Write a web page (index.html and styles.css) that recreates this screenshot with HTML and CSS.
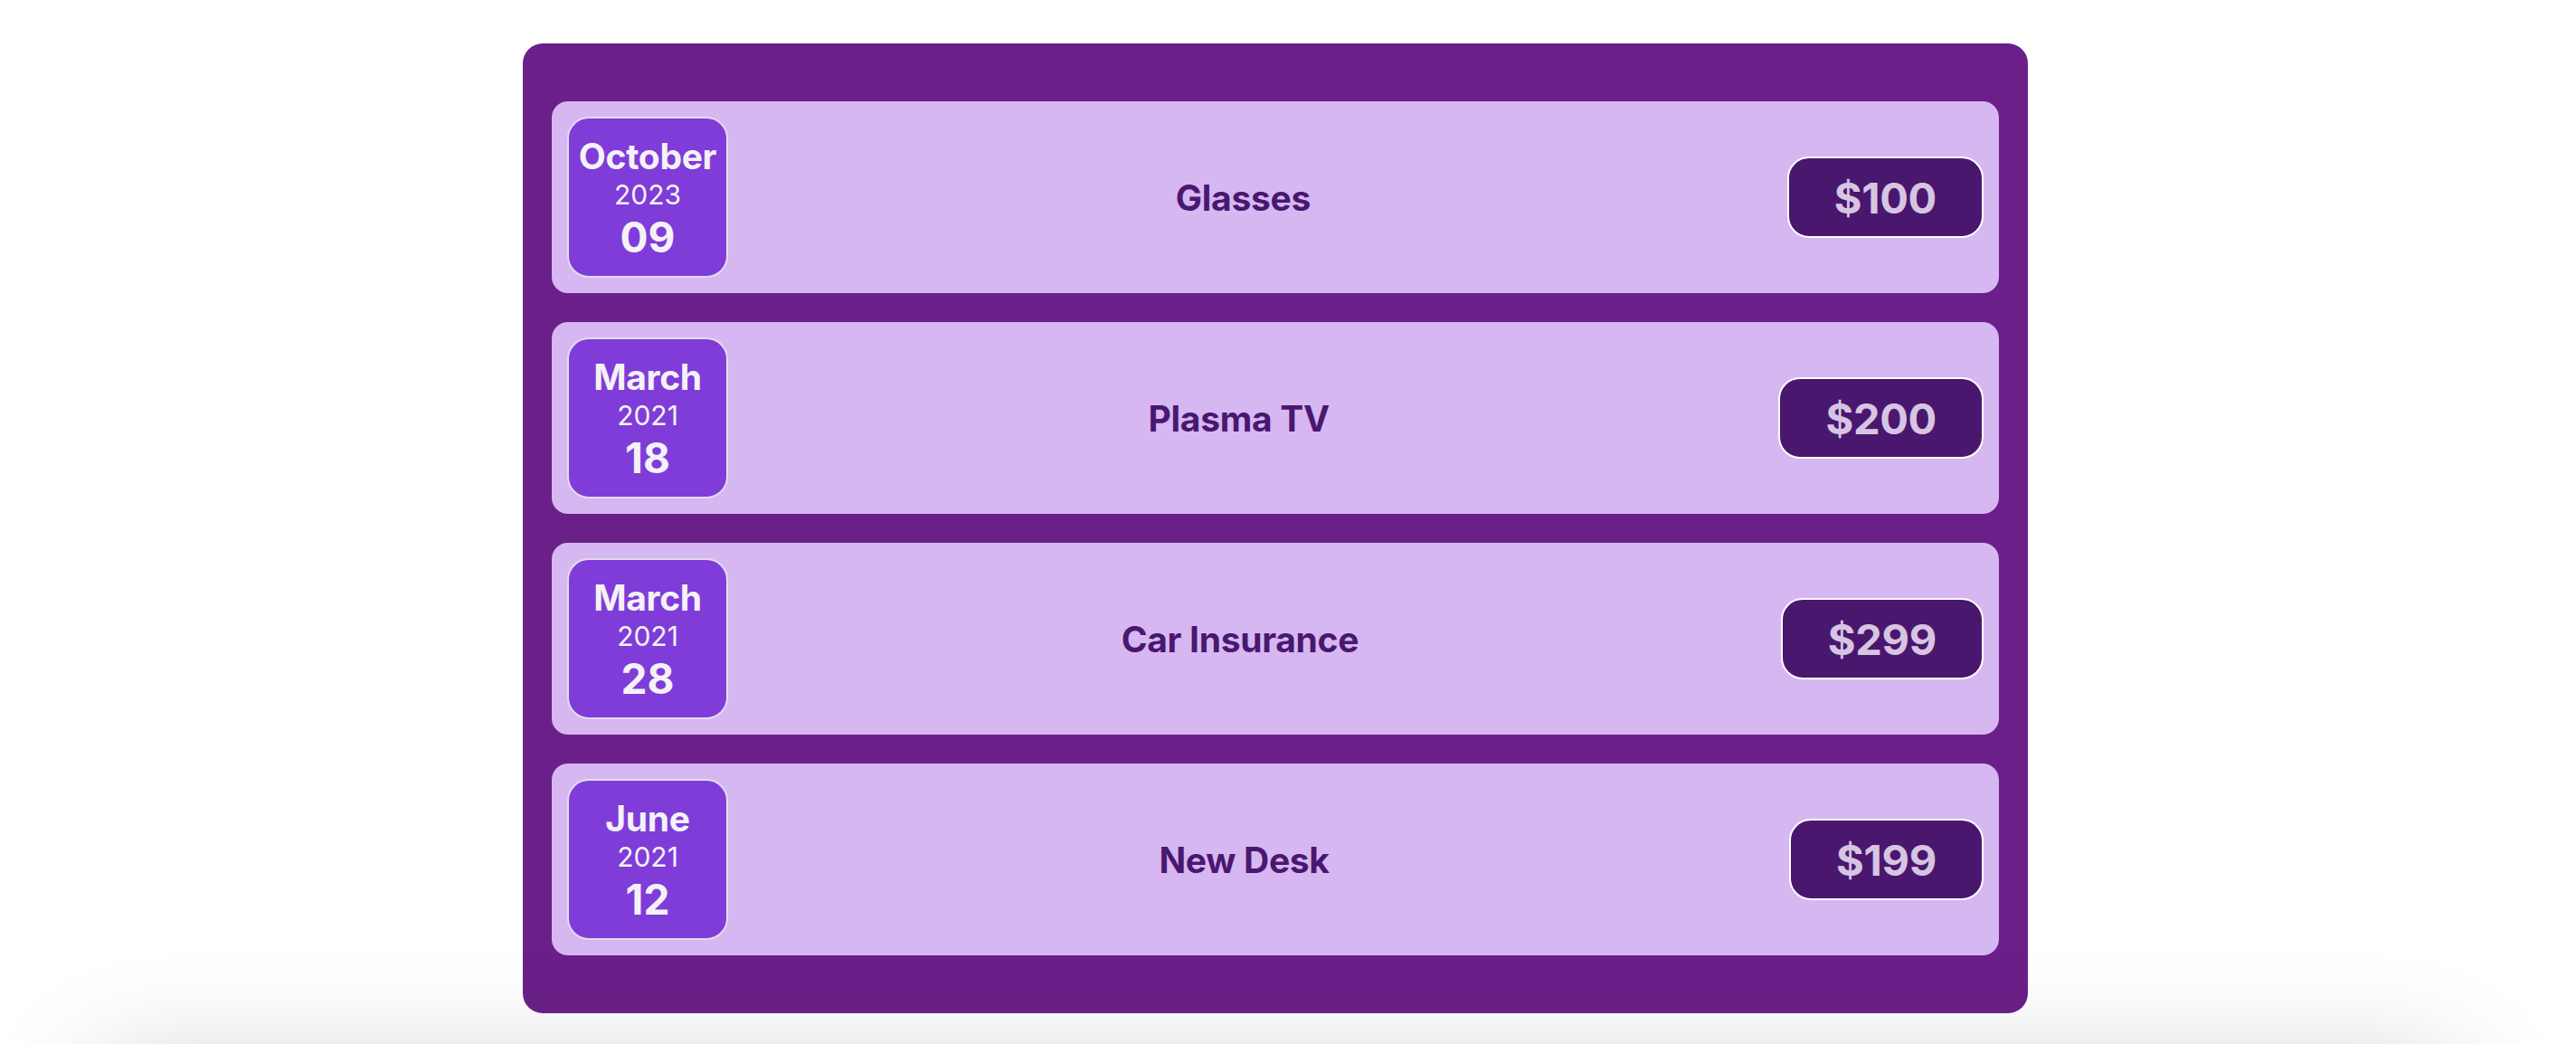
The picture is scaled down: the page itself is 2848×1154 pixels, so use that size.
FILE: index.html
```html
<!DOCTYPE html>
<html lang="en">
<head>
<meta charset="utf-8">
<title>Expenses</title>
<link rel="stylesheet" href="styles.css">
</head>
<body class="page-body">
<div class="page">
  <div class="expenses">
    <div class="expense-item">
      <div class="expense-date">
        <div class="expense-date__month">October</div>
        <div class="expense-date__year">2023</div>
        <div class="expense-date__day">09</div>
      </div>
      <div class="expense-item__description">
        <h2 class="expense-item__title">Glasses</h2>
        <div class="expense-item__price">$100</div>
      </div>
    </div>
    <div class="expense-item">
      <div class="expense-date">
        <div class="expense-date__month">March</div>
        <div class="expense-date__year">2021</div>
        <div class="expense-date__day">18</div>
      </div>
      <div class="expense-item__description">
        <h2 class="expense-item__title">Plasma TV</h2>
        <div class="expense-item__price">$200</div>
      </div>
    </div>
    <div class="expense-item">
      <div class="expense-date">
        <div class="expense-date__month">March</div>
        <div class="expense-date__year">2021</div>
        <div class="expense-date__day">28</div>
      </div>
      <div class="expense-item__description">
        <h2 class="expense-item__title">Car Insurance</h2>
        <div class="expense-item__price">$299</div>
      </div>
    </div>
    <div class="expense-item">
      <div class="expense-date">
        <div class="expense-date__month">June</div>
        <div class="expense-date__year">2021</div>
        <div class="expense-date__day">12</div>
      </div>
      <div class="expense-item__description">
        <h2 class="expense-item__title">New Desk</h2>
        <div class="expense-item__price">$199</div>
      </div>
    </div>
  </div>
  <div class="next-card"></div>
</div>
</body>
</html>
```

FILE: styles.css
```css
html, .page-body {
  margin: 0;
  padding: 0;
  overflow: hidden;
  background: #ffffff;
  font-family: "Inter", "Noto Sans", sans-serif;
}

.page {
  padding-right: 28px;
  padding-top: 48px;
}

.expenses {
  width: 1600px;
  margin: 0 auto;
  padding: 64px 32px;
  background-color: #6b2089;
  border-radius: 22px;
  display: flex;
  flex-direction: column;
  gap: 32px;
}

.expense-item {
  display: flex;
  align-items: center;
  padding: 17px;
  background-color: #d6b7f2;
  border-radius: 18px;
}

.expense-date {
  box-sizing: border-box;
  width: 178px;
  height: 178px;
  flex: none;
  display: flex;
  flex-direction: column;
  align-items: center;
  justify-content: center;
  padding-top: 4px;
  background-color: #7f3cd9;
  border: 2px solid #e4dced;
  border-radius: 24px;
  color: #f4f2f6;
}

.expense-date__month {
  font-size: 39px;
  font-weight: 700;
  line-height: 44px;
  letter-spacing: -0.3px;
}

.expense-date__year {
  font-size: 30px;
  font-weight: 400;
  line-height: 40px;
}

.expense-date__day {
  font-size: 46px;
  font-weight: 700;
  line-height: 54px;
}

.expense-item__description {
  flex: 1;
  display: flex;
  align-items: center;
  gap: 32px;
}

.expense-item__title {
  flex: 1;
  margin: 0;
  text-align: center;
  font-size: 39px;
  font-weight: 700;
  letter-spacing: -0.3px;
  color: #4a1770;
}

.expense-item__price {
  box-sizing: border-box;
  height: 90px;
  display: flex;
  align-items: center;
  padding: 0 50px;
  font-size: 47px;
  font-weight: 700;
  letter-spacing: -0.3px;
  color: #d6c5e2;
  background-color: #4a176e;
  border: 2px solid #ffffff;
  border-radius: 24px;
}

.next-card {
  width: 2600px;
  height: 400px;
  margin: 64px auto 0;
  background: #ffffff;
  box-shadow: 0 0 120px rgba(0, 0, 0, 0.22);
}
```
